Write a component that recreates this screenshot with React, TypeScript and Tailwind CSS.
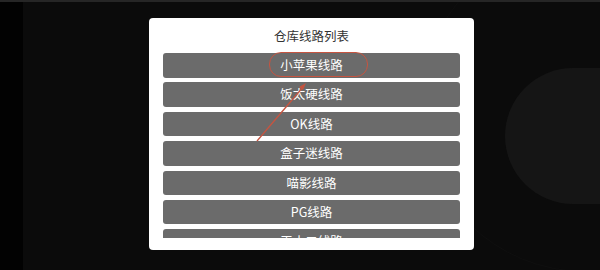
const routes = ["小苹果线路", "饭太硬线路", "OK线路", "盒子迷线路", "喵影线路", "PG线路", "王小二线路"];

export default function App() {
  return (
    <div
      className="relative w-[600px] h-[270px] overflow-hidden bg-[#0b0b0b] border-t-2 border-[#262626]"
      style={{ fontFamily: '"Noto Sans CJK SC", "Noto Sans", sans-serif' }}
    >
      {/* background decoration */}
      <div className="absolute left-0 top-0 h-full w-[23px] bg-[#020202]" />
      <div className="absolute left-[505px] top-[66px] h-[136px] w-[160px] rounded-full bg-[#151515]" />
      <div className="absolute left-[420px] top-[-60px] h-[330px] w-[330px] rounded-full border border-[#0f0f0f]" />

      {/* dialog */}
      <div className="relative ml-[149px] mt-[16px] flex h-[232px] w-[325px] flex-col rounded-[4px] bg-white px-[14px] pb-[12px]">
        <div className="pt-[9px] pb-[8px] text-center text-[12.5px] leading-[18px] text-[#333]">
          仓库线路列表
        </div>
        <div className="flex flex-1 flex-col gap-[4.9px] overflow-hidden">
          {routes.map((r) => (
            <button
              key={r}
              className="h-[24.5px] shrink-0 rounded-[3px] bg-[#6b6b6b] text-center text-[12.5px] leading-[24.5px] text-white"
            >
              {r}
            </button>
          ))}
        </div>
        <div className="absolute left-[120px] top-[34px] h-[25px] w-[99px] rounded-[12px] border-[1.5px] border-[#c65440]" />
      </div>

      {/* arrow */}
      <svg className="absolute left-0 top-0" width="600" height="270" viewBox="0 0 600 270">
        <line x1="257" y1="139" x2="304" y2="84" stroke="#c65440" strokeWidth="1.3" />
        <path d="M306 81 L299 85 L303 88 Z" fill="#c65440" />
      </svg>
    </div>
  );
}
